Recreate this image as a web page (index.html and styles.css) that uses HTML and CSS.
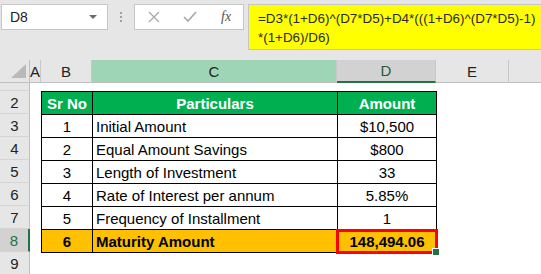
FILE: index.html
```html
<!DOCTYPE html>
<html lang="en">
<head>
    <meta charset="UTF-8">
    <title>Maturity Amount</title>
    <link rel="stylesheet" href="styles.css">
</head>
<body>
    <div class="toolbar">
        <div class="namebox">
            <span>D8</span>
            <span class="caret"></span>
        </div>
        <div class="grip"><i></i><i></i><i></i></div>
        <div class="fx-buttons">
            <svg class="btn-icon" viewBox="0 0 12 12" width="12" height="12">
                <path d="M1 1 L11 11 M11 1 L1 11" stroke="#a8a8a8" stroke-width="1.3" fill="none"/>
            </svg>
            <svg class="btn-icon" viewBox="0 0 14 12" width="14" height="12">
                <path d="M1 6 L5 10 L13 1" stroke="#a8a8a8" stroke-width="1.6" fill="none"/>
            </svg>
            <span class="fx">fx</span>
        </div>
        <div class="formula">=D3*(1+D6)^(D7*D5)+D4*(((1+D6)^(D7*D5)-1)<br>*(1+D6)/D6)</div>
    </div>

    <div class="sheet">
        <div class="corner"></div>
        <div class="colhead">A</div>
        <div class="colhead">B</div>
        <div class="colhead col-c">C</div>
        <div class="colhead active">D</div>
        <div class="colhead">E</div>
        <div class="colhead last"></div>

        <div class="rowhead row-cut"><span>1</span></div>
        <div class="rowhead" style="grid-row: 3">2</div>
        <div class="rowhead" style="grid-row: 4">3</div>
        <div class="rowhead" style="grid-row: 5">4</div>
        <div class="rowhead" style="grid-row: 6">5</div>
        <div class="rowhead" style="grid-row: 7">6</div>
        <div class="rowhead" style="grid-row: 8">7</div>
        <div class="rowhead active" style="grid-row: 9">8</div>
        <div class="rowhead" style="grid-row: 10">9</div>

        <div class="data">
            <div class="cell head center">Sr No</div>
            <div class="cell head center">Particulars</div>
            <div class="cell head center">Amount</div>

            <div class="cell center">1</div>
            <div class="cell">Initial Amount</div>
            <div class="cell center">$10,500</div>

            <div class="cell center">2</div>
            <div class="cell">Equal Amount Savings</div>
            <div class="cell center">$800</div>

            <div class="cell center">3</div>
            <div class="cell">Length of Investment</div>
            <div class="cell center">33</div>

            <div class="cell center">4</div>
            <div class="cell">Rate of Interest per annum</div>
            <div class="cell center">5.85%</div>

            <div class="cell center">5</div>
            <div class="cell">Frequency of Installment</div>
            <div class="cell center">1</div>

            <div class="cell total center">6</div>
            <div class="cell total">Maturity Amount</div>
            <div class="cell total center selected">148,494.06</div>
        </div>
    </div>
</body>
</html>
```

FILE: styles.css
```css
* {
    margin: 0;
    padding: 0;
    box-sizing: border-box;
}

body {
    width: 541px;
    height: 274px;
    overflow: hidden;
    background: #ffffff;
    font-family: "Liberation Sans", Arial, sans-serif;
    color: #000;
}

/* formula bar */
.toolbar {
    height: 60px;
    background: #e6e6e6;
    display: flex;
    align-items: flex-start;
    padding-top: 4px;
}

.namebox {
    margin-left: 1px;
    width: 107px;
    height: 26px;
    background: #fff;
    border: 1px solid #c6c6c6;
    display: flex;
    align-items: center;
    justify-content: space-between;
    padding: 0 10px 0 8px;
    font-size: 14px;
    color: #222;
}

.caret {
    width: 0;
    height: 0;
    border-left: 4px solid transparent;
    border-right: 4px solid transparent;
    border-top: 4px solid #6b6b6b;
}

.grip {
    width: 26px;
    height: 26px;
    display: flex;
    flex-direction: column;
    align-items: center;
    justify-content: center;
    gap: 2px;
}

.grip i {
    width: 2px;
    height: 2px;
    background: #a0a0a0;
}

.fx-buttons {
    width: 110px;
    height: 26px;
    background: #fff;
    border: 1px solid #c6c6c6;
    display: flex;
    align-items: center;
    padding-left: 13px;
}

.btn-icon {
    display: block;
}

.btn-icon:first-child {
    margin-right: 23px;
}

.fx {
    margin-left: 24px;
    font-family: "Liberation Serif", "Times New Roman", serif;
    font-style: italic;
    font-size: 14px;
    color: #555;
}

.formula {
    margin-left: 4px;
    flex: 1;
    height: 46px;
    background: #ffff00;
    border: 1px solid #c6c6c6;
    border-right: none;
    padding: 4px 0 0 9px;
    font-size: 13.4px;
    line-height: 19px;
    color: #2a2a2a;
    white-space: nowrap;
}

/* sheet */
.sheet {
    display: grid;
    grid-template-columns: 30px 11px 51px 245px 99px 73px 1fr;
    grid-template-rows: 23px 8px repeat(8, 23px);
    font-size: 15px;
}

.corner {
    background: #e6e6e6;
    border-right: 1px solid #bfbfbf;
    border-bottom: 1px solid #bfbfbf;
    position: relative;
}

.corner::after {
    content: '';
    position: absolute;
    right: 3px;
    bottom: 4px;
    border-left: 15px solid transparent;
    border-bottom: 14px solid #b9b9b9;
}

.colhead {
    background: #e6e6e6;
    border-right: 1px solid #c8c8c8;
    border-bottom: 1px solid #bfbfbf;
    display: flex;
    align-items: center;
    justify-content: center;
    font-size: 15px;
    color: #222;
}

.colhead.col-c {
    background: #9fd5b7;
}

.colhead.active {
    background: #d2d2d2;
    color: #1e5b3a;
    border-bottom: 2px solid #217346;
}

.colhead.last {
    border-right: none;
}

.rowhead {
    grid-column: 1;
    background: #e6e6e6;
    border-right: 1px solid #bfbfbf;
    border-bottom: 1px solid #d4d4d4;
    display: flex;
    align-items: center;
    justify-content: center;
    font-size: 15px;
    color: #222;
}

.rowhead.active {
    background: #d2d2d2;
    color: #217346;
    border-right: 2px solid #217346;
}

.row-cut {
    grid-row: 2;
    overflow: hidden;
    align-items: flex-end;
}

.row-cut span {
    line-height: 23px;
    margin-bottom: 3px;
}

/* data table */
.data {
    grid-column: 3 / 6;
    grid-row: 3 / 10;
    width: 396px;
    height: 162px;
    align-self: start;
    display: grid;
    grid-template-columns: 51px 245px 99px;
    grid-auto-rows: 23px;
    border-left: 1px solid #000;
    border-top: 1px solid #000;
    position: relative;
    z-index: 1;
}

.cell {
    border-right: 1px solid #000;
    border-bottom: 1px solid #000;
    display: flex;
    align-items: center;
    padding-left: 3px;
    white-space: nowrap;
    background: #fff;
}

.cell.center {
    justify-content: center;
    padding-left: 0;
}

.cell.head {
    background: #00b050;
    color: #fff;
    font-weight: bold;
}

.cell.total {
    background: #ffc000;
    font-weight: bold;
}

.cell.selected {
    position: relative;
}

.cell.selected::after {
    content: '';
    position: absolute;
    top: -1px;
    right: -2px;
    bottom: -2px;
    left: -2px;
    border: 3px solid #ff0000;
}

.cell.selected::before {
    content: '';
    position: absolute;
    right: -4px;
    bottom: -4px;
    width: 6px;
    height: 6px;
    background: #217346;
    border: 1px solid #fff;
    z-index: 2;
}
```
